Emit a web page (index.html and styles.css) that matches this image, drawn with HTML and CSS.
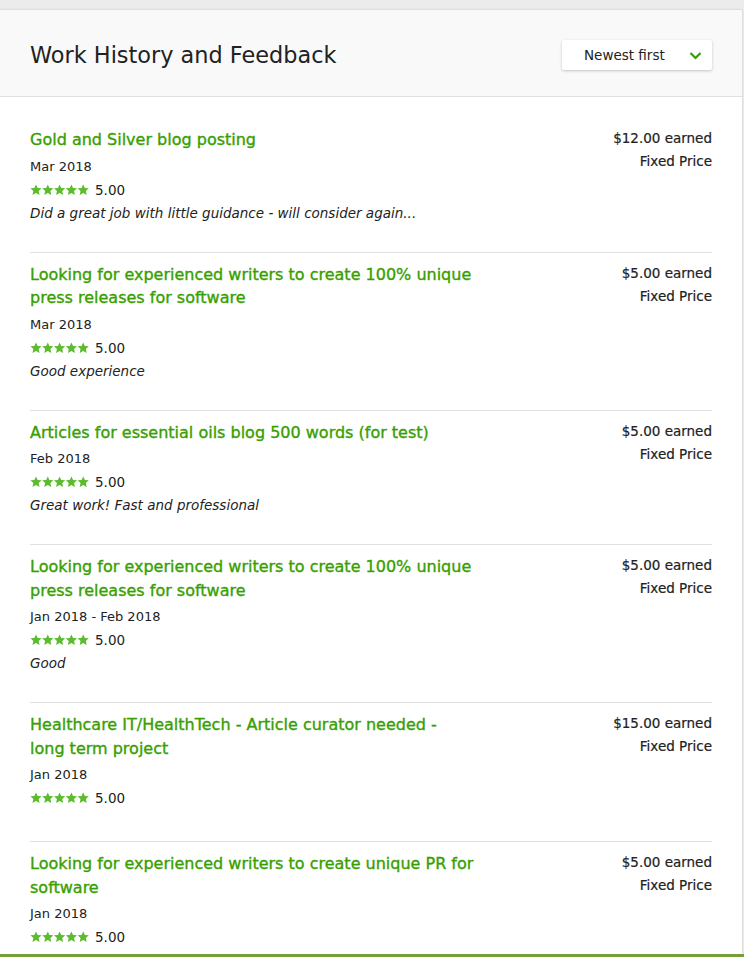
FILE: index.html
```html
<!DOCTYPE html>
<html>
<head>
<meta charset="utf-8">
<title>Work History and Feedback</title>
<link rel="stylesheet" href="styles.css">
</head>
<body>
<svg class="defs" width="0" height="0" aria-hidden="true">
  <defs>
    <path id="star" d="M12 0.8l3.3 7.1 7.9.8-5.9 5.3 1.7 7.8L12 17.9l-7 3.9 1.7-7.8L0.8 8.7l7.9-.8z"/>
  </defs>
</svg>
<section class="card">
  <header class="card-header">
    <h1 class="card-title">Work History and Feedback</h1>
    <button class="sort">
      <span>Newest first</span>
      <svg class="chev" width="13" height="9" viewBox="0 0 13 9"><polyline points="1.5,2 6.5,7 11.5,2" fill="none" stroke="#37a000" stroke-width="2.2"/></svg>
    </button>
  </header>
  <div class="list">
    <article class="item">
      <div class="item-main">
        <h2 class="job">Gold and Silver blog posting</h2>
        <div class="date">Mar 2018</div>
        <div class="rating"><svg class="stars" width="59" height="12" viewBox="0 0 59 12"><use href="#star" transform="translate(0,0) scale(0.5)"/><use href="#star" transform="translate(11.8,0) scale(0.5)"/><use href="#star" transform="translate(23.6,0) scale(0.5)"/><use href="#star" transform="translate(35.4,0) scale(0.5)"/><use href="#star" transform="translate(47.2,0) scale(0.5)"/></svg><span>5.00</span></div>
        <p class="comment">Did a great job with little guidance - will consider again...</p>
      </div>
      <div class="item-side">
        <div class="earned">$12.00 earned</div>
        <div class="type">Fixed Price</div>
      </div>
    </article>
    <article class="item">
      <div class="item-main">
        <h2 class="job">Looking for experienced writers to create 100% unique press releases for software</h2>
        <div class="date">Mar 2018</div>
        <div class="rating"><svg class="stars" width="59" height="12" viewBox="0 0 59 12"><use href="#star" transform="translate(0,0) scale(0.5)"/><use href="#star" transform="translate(11.8,0) scale(0.5)"/><use href="#star" transform="translate(23.6,0) scale(0.5)"/><use href="#star" transform="translate(35.4,0) scale(0.5)"/><use href="#star" transform="translate(47.2,0) scale(0.5)"/></svg><span>5.00</span></div>
        <p class="comment">Good experience</p>
      </div>
      <div class="item-side">
        <div class="earned">$5.00 earned</div>
        <div class="type">Fixed Price</div>
      </div>
    </article>
    <article class="item">
      <div class="item-main">
        <h2 class="job">Articles for essential oils blog 500 words (for test)</h2>
        <div class="date">Feb 2018</div>
        <div class="rating"><svg class="stars" width="59" height="12" viewBox="0 0 59 12"><use href="#star" transform="translate(0,0) scale(0.5)"/><use href="#star" transform="translate(11.8,0) scale(0.5)"/><use href="#star" transform="translate(23.6,0) scale(0.5)"/><use href="#star" transform="translate(35.4,0) scale(0.5)"/><use href="#star" transform="translate(47.2,0) scale(0.5)"/></svg><span>5.00</span></div>
        <p class="comment">Great work! Fast and professional</p>
      </div>
      <div class="item-side">
        <div class="earned">$5.00 earned</div>
        <div class="type">Fixed Price</div>
      </div>
    </article>
    <article class="item">
      <div class="item-main">
        <h2 class="job">Looking for experienced writers to create 100% unique press releases for software</h2>
        <div class="date">Jan 2018 - Feb 2018</div>
        <div class="rating"><svg class="stars" width="59" height="12" viewBox="0 0 59 12"><use href="#star" transform="translate(0,0) scale(0.5)"/><use href="#star" transform="translate(11.8,0) scale(0.5)"/><use href="#star" transform="translate(23.6,0) scale(0.5)"/><use href="#star" transform="translate(35.4,0) scale(0.5)"/><use href="#star" transform="translate(47.2,0) scale(0.5)"/></svg><span>5.00</span></div>
        <p class="comment">Good</p>
      </div>
      <div class="item-side">
        <div class="earned">$5.00 earned</div>
        <div class="type">Fixed Price</div>
      </div>
    </article>
    <article class="item item--nocomment">
      <div class="item-main">
        <h2 class="job">Healthcare IT/HealthTech - Article curator needed - long term project</h2>
        <div class="date">Jan 2018</div>
        <div class="rating"><svg class="stars" width="59" height="12" viewBox="0 0 59 12"><use href="#star" transform="translate(0,0) scale(0.5)"/><use href="#star" transform="translate(11.8,0) scale(0.5)"/><use href="#star" transform="translate(23.6,0) scale(0.5)"/><use href="#star" transform="translate(35.4,0) scale(0.5)"/><use href="#star" transform="translate(47.2,0) scale(0.5)"/></svg><span>5.00</span></div>
      </div>
      <div class="item-side">
        <div class="earned">$15.00 earned</div>
        <div class="type">Fixed Price</div>
      </div>
    </article>
    <article class="item">
      <div class="item-main">
        <h2 class="job">Looking for experienced writers to create unique PR for software</h2>
        <div class="date">Jan 2018</div>
        <div class="rating"><svg class="stars" width="59" height="12" viewBox="0 0 59 12"><use href="#star" transform="translate(0,0) scale(0.5)"/><use href="#star" transform="translate(11.8,0) scale(0.5)"/><use href="#star" transform="translate(23.6,0) scale(0.5)"/><use href="#star" transform="translate(35.4,0) scale(0.5)"/><use href="#star" transform="translate(47.2,0) scale(0.5)"/></svg><span>5.00</span></div>
        <p class="comment">Excellent writer, will hire again</p>
      </div>
      <div class="item-side">
        <div class="earned">$5.00 earned</div>
        <div class="type">Fixed Price</div>
      </div>
    </article>
  </div>
</section>
<div class="bottom-bar"></div>
</body>
</html>
```
FILE: styles.css
```css
html, body {
  margin: 0;
  padding: 0;
}
body {
  background: #ececec;
  font-family: "DejaVu Sans", "Liberation Sans", sans-serif;
  color: #222;
  overflow: hidden;
}
.defs {
  position: absolute;
  width: 0;
  height: 0;
}
.card {
  margin-top: 10px;
  width: 742px;
  background: #fff;
  box-shadow: 0 0 2px rgba(0, 0, 0, 0.18);
}
.card-header {
  height: 87px;
  box-sizing: border-box;
  background: #f9f9f9;
  border-bottom: 1px solid #e0e0e0;
  display: flex;
  align-items: center;
  justify-content: space-between;
  padding: 0 30px;
}
.card-title {
  margin: 3px 0 0;
  font-size: 22.4px;
  font-weight: normal;
  color: #222;
}
.sort {
  width: 150px;
  height: 30px;
  margin-top: 3px;
  background: #fff;
  border: 0;
  border-radius: 2px;
  box-shadow: 0 1px 3px rgba(0, 0, 0, 0.22);
  display: flex;
  align-items: center;
  justify-content: space-between;
  padding: 0 10px 0 22px;
  font-family: inherit;
  font-size: 13.5px;
  color: #222;
}
.chev {
  display: block;
  margin-top: 1px;
}
.list {
  padding: 21px 30px 0;
}
.item {
  display: flex;
  justify-content: space-between;
  padding: 10px 0 27px;
  border-bottom: 1px solid #e0e0e0;
}
.item--nocomment {
  padding-bottom: 31px;
}
.item-main {
  flex: 0 1 446px;
}
.job {
  margin: 0 0 3px;
  font-size: 16px;
  line-height: 23.5px;
  font-weight: normal;
  color: #37a000;
  -webkit-text-stroke: 0.35px #37a000;
}
.date {
  font-size: 13px;
  line-height: 23px;
}
.rating {
  display: flex;
  align-items: center;
  height: 24px;
  font-size: 13.5px;
}
.stars {
  display: block;
  fill: #5cbb2f;
  margin-right: 6px;
}
.comment {
  margin: 0;
  font-size: 13.5px;
  line-height: 23px;
  font-style: italic;
}
.item-side {
  text-align: right;
  font-size: 13.5px;
  -webkit-text-stroke: 0.2px #222;
}
.earned, .type {
  line-height: 20px;
  margin-bottom: 3px;
  white-space: nowrap;
}
.bottom-bar {
  position: fixed;
  left: 0;
  right: 0;
  bottom: 0;
  height: 3px;
  background: #76a03a;
}
```
